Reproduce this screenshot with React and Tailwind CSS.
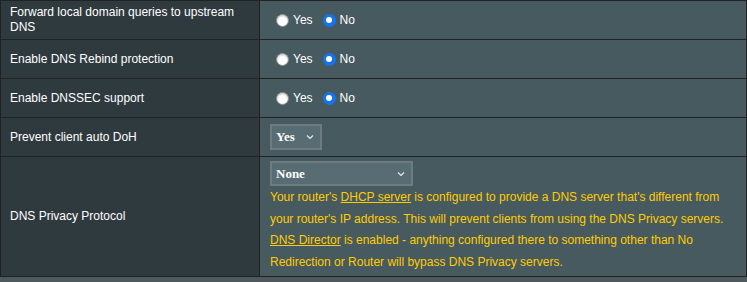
const font = { fontFamily: '"Liberation Sans", Arial, sans-serif' };

function Radio({ checked }) {
  if (checked) {
    return (
      <span className="shrink-0 w-[13px] h-[13px] rounded-full bg-[#1673f0] flex items-center justify-center">
        <span className="block w-[6px] h-[6px] rounded-full bg-white" />
      </span>
    );
  }
  return (
    <span className="shrink-0 block w-[13px] h-[13px] rounded-full bg-white border border-[#8c8c8c] shadow-[inset_0_1px_2px_rgba(0,0,0,0.25)]" />
  );
}

function YesNo() {
  return (
    <div className="flex items-center pl-[16px] text-white text-[12px]">
      <Radio />
      <span className="ml-[4px]">Yes</span>
      <span className="ml-[10px]">
        <Radio checked />
      </span>
      <span className="ml-[4px]">No</span>
    </div>
  );
}

function Chevron() {
  return (
    <svg width="8" height="6" viewBox="0 0 8 6" className="shrink-0">
      <polyline points="1,1.5 4,4.5 7,1.5" fill="none" stroke="#e8ecee" strokeWidth="1.2" />
    </svg>
  );
}

function Select({ value, width, height }) {
  return (
    <div
      className={`flex items-center justify-between border-2 border-[#6e7b7f] bg-[#576d73] pl-[4px] pr-[6px] ${width} ${height}`}
    >
      <span
        className="text-white font-bold text-[13px]"
        style={{ fontFamily: '"Liberation Serif", "Times New Roman", serif' }}
      >
        {value}
      </span>
      <Chevron />
    </div>
  );
}

function Row({ label, children, last, rightClass = "" }) {
  return (
    <div className={`flex ${last ? "" : "border-b border-[#222]"}`}>
      <div className="w-[259px] shrink-0 border-r border-[#222] bg-[#2f3a3f] pl-[9px] pr-2 flex items-center text-white text-[12px] leading-[15px]">
        {label}
      </div>
      <div className={`flex-1 bg-[#475a5f] ${rightClass}`}>{children}</div>
    </div>
  );
}

export default function App() {
  return (
    <div className="w-[747px] h-[282px] bg-[#4d595d] overflow-hidden" style={font}>
      <div className="border border-[#222]">
        <Row label={<span>Forward local domain queries to upstream<br />DNS</span>} rightClass="h-[38px] flex items-center">
          <YesNo />
        </Row>
        <Row label="Enable DNS Rebind protection" rightClass="h-[38px] flex items-center">
          <YesNo />
        </Row>
        <Row label="Enable DNSSEC support" rightClass="h-[38px] flex items-center">
          <YesNo />
        </Row>
        <Row label="Prevent client auto DoH" rightClass="h-[38px] flex items-center pl-[10px]">
          <Select value="Yes" width="w-[52px]" height="h-[26px]" />
        </Row>
        <Row label="DNS Privacy Protocol" last rightClass="h-[119px] pl-[10px] pt-[4px]">
          <Select value="None" width="w-[143px]" height="h-[25px]" />
          <div className="text-[#ffcc00] text-[12px] leading-[21.5px] mt-[1px] whitespace-nowrap">
            <div>
              Your router's <span className="underline">DHCP server</span> is configured to provide a DNS server that's different from
              <br />
              your router's IP address. This will prevent clients from using the DNS Privacy servers.
            </div>
            <div>
              <span className="underline">DNS Director</span> is enabled - anything configured there to something other than No
              <br />
              Redirection or Router will bypass DNS Privacy servers.
            </div>
          </div>
        </Row>
      </div>
    </div>
  );
}
